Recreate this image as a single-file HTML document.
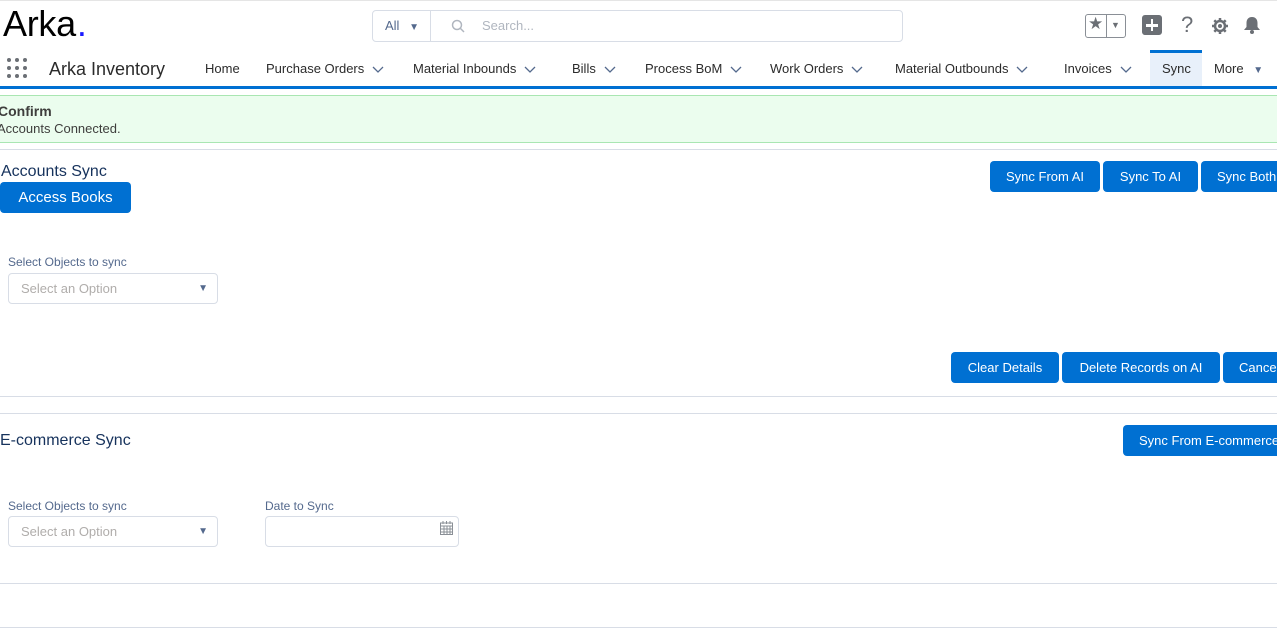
<!DOCTYPE html>
<html><head><style>
*{box-sizing:border-box;margin:0;padding:0}
body{width:1277px;height:628px;overflow:hidden;background:#fff;font-family:"Liberation Sans",sans-serif;position:relative;color:#16325c}
.a{position:absolute;white-space:nowrap}
.btn{position:absolute;background:#0070d2;color:#fff;font-size:13px;text-align:center;border-radius:4px;display:flex;align-items:center;justify-content:center}
.line{position:absolute;left:0;width:1277px;height:1px;background:#d8dde6}
.lbl{position:absolute;font-size:12px;color:#54698d}
.sel{position:absolute;border:1px solid #d8dde6;border-radius:4px;font-size:13px;color:#b0adab;padding-left:12px;display:flex;align-items:center}
.nav{position:absolute;top:61px;font-size:13px;color:#2b2b2b}
.nav svg{vertical-align:middle;margin-left:8px}
</style></head><body>
<div class="line" style="top:0;background:#e5e5e5"></div>
<div class="a" style="left:3px;top:3px;font-size:36px;color:#000;letter-spacing:-0.3px">Arka<span style="color:#1a1aff;margin-left:1px">.</span></div>
<div class="a" style="left:372px;top:10px;width:531px;height:32px;border:1px solid #d8dde6;border-radius:4px"></div>
<div class="a" style="left:430px;top:11px;width:1px;height:30px;background:#d8dde6"></div>
<div class="a" style="left:385px;top:18px;font-size:13px;color:#54698d">All <span style="font-size:10px;margin-left:6px">▼</span></div>
<svg class="a" style="left:451px;top:19px" width="14" height="14" viewBox="0 0 14 14"><circle cx="6" cy="6" r="4.5" fill="none" stroke="#b0b6bf" stroke-width="1.5"/><path d="M9 9l4 4" stroke="#b0b6bf" stroke-width="1.5"/></svg>
<div class="a" style="left:482px;top:18px;font-size:13px;color:#b0b6bf">Search...</div>
<div class="a" style="left:1085px;top:14px;width:41px;height:24px;border:1px solid #8a8f96;border-radius:3px"></div>
<div class="a" style="left:1106px;top:15px;width:1px;height:22px;background:#8a8f96"></div>
<div class="a" style="left:1088px;top:14px;font-size:17px;color:#6b6f75">★</div>
<div class="a" style="left:1111px;top:20px;font-size:9px;color:#6b6f75">▼</div>
<div class="a" style="left:1142px;top:15px;width:20px;height:20px;background:#6b6f75;border-radius:3px"></div>
<div class="a" style="left:1146px;top:24px;width:12px;height:2.5px;background:#fff"></div>
<div class="a" style="left:1150.75px;top:19px;width:2.5px;height:12px;background:#fff"></div>
<div class="a" style="left:1181px;top:12px;font-size:22px;color:#6b6f75">?</div>
<svg class="a" style="left:1211px;top:17px" width="18" height="18" viewBox="0 0 18 18"><circle cx="9" cy="9" r="5" fill="none" stroke="#6b6f75" stroke-width="2.5"/><path d="M9 1v4M9 13v4M1 9h4M13 9h4M3.3 3.3l2.8 2.8M11.9 11.9l2.8 2.8M3.3 14.7l2.8-2.8M11.9 6.1l2.8-2.8" stroke="#6b6f75" stroke-width="2.5"/><circle cx="9" cy="9" r="2" fill="#6b6f75"/></svg>
<svg class="a" style="left:1242px;top:15px" width="20" height="20" viewBox="0 0 20 20"><path d="M10 2c-4 0-5.5 3-5.5 6v4L2 15h16l-2.5-3V8c0-3-1.5-6-5.5-6z" fill="#6b6f75"/><circle cx="10" cy="17" r="2" fill="#6b6f75"/></svg>
<svg class="a" style="left:6px;top:57px" width="22" height="22" viewBox="0 0 22 22" fill="#6b6f75"><circle cx="3" cy="3" r="2"/><circle cx="11" cy="3" r="2"/><circle cx="19" cy="3" r="2"/><circle cx="3" cy="11" r="2"/><circle cx="11" cy="11" r="2"/><circle cx="19" cy="11" r="2"/><circle cx="3" cy="19" r="2"/><circle cx="11" cy="19" r="2"/><circle cx="19" cy="19" r="2"/></svg>
<div class="a" style="left:49px;top:59px;font-size:18px;color:#2b2b2b">Arka Inventory</div>
<div class="a" style="left:1150px;top:50px;width:52px;height:37px;background:#e8f0fa;border-top:3px solid #0070d2"></div>
<div class="nav" style="left:205px">Home</div>
<div class="nav" style="left:266px">Purchase Orders<svg width="12" height="8"><path d="M1 1l5 5 5-5" fill="none" stroke="#54698d" stroke-width="1.3"/></svg></div>
<div class="nav" style="left:413px">Material Inbounds<svg width="12" height="8"><path d="M1 1l5 5 5-5" fill="none" stroke="#54698d" stroke-width="1.3"/></svg></div>
<div class="nav" style="left:572px">Bills<svg width="12" height="8"><path d="M1 1l5 5 5-5" fill="none" stroke="#54698d" stroke-width="1.3"/></svg></div>
<div class="nav" style="left:645px">Process BoM<svg width="12" height="8"><path d="M1 1l5 5 5-5" fill="none" stroke="#54698d" stroke-width="1.3"/></svg></div>
<div class="nav" style="left:770px">Work Orders<svg width="12" height="8"><path d="M1 1l5 5 5-5" fill="none" stroke="#54698d" stroke-width="1.3"/></svg></div>
<div class="nav" style="left:895px">Material Outbounds<svg width="12" height="8"><path d="M1 1l5 5 5-5" fill="none" stroke="#54698d" stroke-width="1.3"/></svg></div>
<div class="nav" style="left:1064px">Invoices<svg width="12" height="8"><path d="M1 1l5 5 5-5" fill="none" stroke="#54698d" stroke-width="1.3"/></svg></div>
<div class="nav" style="left:1162px">Sync</div>
<div class="nav" style="left:1214px">More <span style="font-size:10px;margin-left:6px;color:#54698d">▼</span></div>
<div class="a" style="left:0;top:86px;width:1277px;height:3px;background:#0070d2"></div>
<div class="a" style="left:0;top:95px;width:1277px;height:48px;background:#ebfdee;border-top:1px solid #a9e6b2;border-bottom:1px solid #a9e6b2"></div>
<div class="a" style="left:-2px;top:103px;font-size:14px;font-weight:bold;color:#3e3e3c">Confirm</div>
<div class="a" style="left:-3px;top:121px;font-size:13px;color:#3e3e3c">Accounts Connected.</div>
<div class="line" style="top:149px"></div>
<div class="a" style="left:1px;top:163px;font-size:16px">Accounts Sync</div>
<div class="btn" style="left:0;top:182px;width:131px;height:31px;font-size:15px">Access Books</div>
<div class="btn" style="left:990px;top:161px;width:110px;height:31px">Sync From AI</div>
<div class="btn" style="left:1103px;top:161px;width:95px;height:31px">Sync To AI</div>
<div class="btn" style="left:1201px;top:161px;width:95px;height:31px;justify-content:flex-start;padding-left:16px">Sync Both</div>
<div class="lbl" style="left:8px;top:255px">Select Objects to sync</div>
<div class="sel" style="left:8px;top:273px;width:210px;height:31px">Select an Option<span style="position:absolute;right:9px;font-size:10px;color:#54698d">▼</span></div>
<div class="btn" style="left:951px;top:352px;width:108px;height:31px">Clear Details</div>
<div class="btn" style="left:1062px;top:352px;width:158px;height:31px">Delete Records on AI</div>
<div class="btn" style="left:1223px;top:352px;width:80px;height:31px;justify-content:flex-start;padding-left:16px">Cancel</div>
<div class="line" style="top:396px"></div>
<div class="line" style="top:413px"></div>
<div class="a" style="left:0;top:432px;font-size:16px">E-commerce Sync</div>
<div class="btn" style="left:1123px;top:425px;width:170px;height:31px;justify-content:flex-start;padding-left:16px">Sync From E-commerce</div>
<div class="lbl" style="left:8px;top:499px">Select Objects to sync</div>
<div class="sel" style="left:8px;top:516px;width:210px;height:31px">Select an Option<span style="position:absolute;right:9px;font-size:10px;color:#54698d">▼</span></div>
<div class="lbl" style="left:265px;top:499px">Date to Sync</div>
<div class="sel" style="left:265px;top:516px;width:194px;height:31px"></div>
<svg class="a" style="left:440px;top:521px" width="13" height="14" viewBox="0 0 13 14"><rect x="0.5" y="2" width="12" height="11.5" fill="#fff" stroke="#8a8f96"/><path d="M0.5 5h12M4 5v8.5M7 5v8.5M10 5v8.5M0.5 8h12M0.5 11h12M3 0v3M6.5 0v3M10 0v3" stroke="#8a8f96"/></svg>
<div class="line" style="top:583px"></div>
<div class="line" style="top:627px"></div>
</body></html>
